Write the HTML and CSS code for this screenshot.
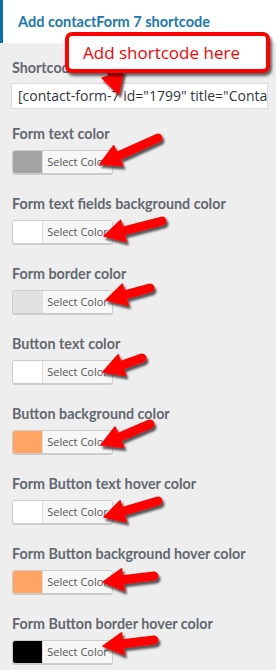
FILE: index.html
```html
<!DOCTYPE html>
<html>
<head>
<meta charset="utf-8">
<link rel="stylesheet" href="styles.css">
</head>
<body>
<div class="page">
  <div class="header">Add contactForm 7 shortcode</div>
  <div class="body">
    <div class="field first">
      <label class="label">Shortcode</label>
      <div class="input">[contact-form-7 id="1799" title="Contact form 1"]</div>
    </div>
    <div class="field">
      <label class="label">Form text color</label>
      <div class="color-btn"><span class="swatch" style="background:#a4a4a4"></span><span class="sel">Select Color</span></div>
    </div>
    <div class="field">
      <label class="label">Form text fields background color</label>
      <div class="color-btn"><span class="swatch" style="background:#ffffff"></span><span class="sel">Select Color</span></div>
    </div>
    <div class="field">
      <label class="label">Form border color</label>
      <div class="color-btn"><span class="swatch" style="background:#e2e2e2"></span><span class="sel">Select Color</span></div>
    </div>
    <div class="field">
      <label class="label">Button text color</label>
      <div class="color-btn"><span class="swatch" style="background:#ffffff"></span><span class="sel">Select Color</span></div>
    </div>
    <div class="field">
      <label class="label">Button background color</label>
      <div class="color-btn"><span class="swatch" style="background:#ffa463"></span><span class="sel">Select Color</span></div>
    </div>
    <div class="field">
      <label class="label">Form Button text hover color</label>
      <div class="color-btn"><span class="swatch" style="background:#ffffff"></span><span class="sel">Select Color</span></div>
    </div>
    <div class="field">
      <label class="label">Form Button background hover color</label>
      <div class="color-btn"><span class="swatch" style="background:#ffa463"></span><span class="sel">Select Color</span></div>
    </div>
    <div class="field">
      <label class="label">Form Button border hover color</label>
      <div class="color-btn"><span class="swatch" style="background:#000000"></span><span class="sel">Select Color</span></div>
    </div>
  </div>

  <svg class="arrows" width="276" height="670" viewBox="0 0 276 670" xmlns="http://www.w3.org/2000/svg">
    <defs>
      <filter id="sh" x="-30%" y="-30%" width="160%" height="160%">
        <feDropShadow dx="2" dy="3" stdDeviation="1.3" flood-color="#000" flood-opacity="0.65"/>
      </filter>
    </defs>
    <g class="arr" filter="url(#sh)">
      <g transform="translate(108 60) rotate(72.6)"><path class="shaft" d="M0 0 H18"/><path class="head" d="M15.5 -11 L35.5 0 L15.5 11 Z"/></g>
      <g transform="translate(158 138) rotate(155.9)"><path class="shaft" d="M0 0 H46"/><path class="head" d="M43.6 -11 L63.6 0 L43.6 11 Z"/></g>
      <g transform="translate(162 221) rotate(165.5)"><path class="shaft" d="M0 0 H42"/><path class="head" d="M39.9 -11 L59.9 0 L39.9 11 Z"/></g>
      <g transform="translate(150 288) rotate(164.7)"><path class="shaft" d="M0 0 H28"/><path class="head" d="M25.6 -11 L45.6 0 L25.6 11 Z"/></g>
      <g transform="translate(142 358) rotate(160.3)"><path class="shaft" d="M0 0 H24"/><path class="head" d="M21.4 -11 L41.4 0 L21.4 11 Z"/></g>
      <g transform="translate(150 424) rotate(156.8)"><path class="shaft" d="M0 0 H36"/><path class="head" d="M33.3 -11 L53.3 0 L33.3 11 Z"/></g>
      <g transform="translate(158 501) rotate(163.5)"><path class="shaft" d="M0 0 H38"/><path class="head" d="M36.3 -11 L56.3 0 L36.3 11 Z"/></g>
      <g transform="translate(154 576) rotate(173.3)"><path class="shaft" d="M0 0 H34"/><path class="head" d="M31.4 -11 L51.4 0 L31.4 11 Z"/></g>
      <g transform="translate(154 640) rotate(173.3)"><path class="shaft" d="M0 0 H34"/><path class="head" d="M31.4 -11 L51.4 0 L31.4 11 Z"/></g>
    </g>
  </svg>

  <div class="callout">Add shortcode here</div>
</div>
</body>
</html>
```

FILE: styles.css
```css
html, body {
  margin: 0;
  padding: 0;
  background: #eeeeee;
}
body {
  font-family: "Open Sans", "Noto Sans", sans-serif;
  color: #555d66;
}
.page {
  position: relative;
  width: 276px;
  height: 670px;
  overflow: hidden;
  background: #eeeeee;
}
.header {
  height: 43px;
  line-height: 43px;
  background: #ffffff;
  border-left: 3px solid #0073aa;
  padding-left: 15px;
  font-family: "Lato", "Open Sans", sans-serif;
  font-size: 14.5px;
  font-weight: 700;
  color: #1a78b0;
  white-space: nowrap;
}
.body {
  padding: 15px 8px 0 12px;
}
.field {
  margin-bottom: 20px;
}
.field.first {
  margin-bottom: 15px;
}
.label {
  display: block;
  font-family: "Lato", "Open Sans", sans-serif;
  font-size: 14.3px;
  font-weight: 700;
  line-height: 20px;
  color: #62686e;
  margin-bottom: 6px;
  white-space: nowrap;
}
.field.first .label {
  margin-bottom: 5px;
}
.input {
  margin-left: -1px;
  height: 26px;
  box-sizing: border-box;
  border: 1px solid #dddddd;
  background: #ffffff;
  font-size: 14px;
  line-height: 24px;
  padding-left: 6px;
  color: #32373c;
  white-space: nowrap;
  overflow: hidden;
}
.color-btn {
  display: flex;
  width: 101px;
  height: 24px;
  box-sizing: border-box;
  border: 1px solid #cccccc;
  border-radius: 3px;
  box-shadow: 0 1px 0 #cccccc;
  overflow: hidden;
  background: #f7f7f7;
}
.swatch {
  width: 29px;
  flex: none;
}
.sel {
  flex: 1;
  border-left: 1px solid #dddddd;
  background: #f7f7f7;
  font-size: 11px;
  line-height: 22px;
  color: #555555;
  text-align: center;
  white-space: nowrap;
}
.arrows {
  position: absolute;
  left: 0;
  top: 0;
  z-index: 1;
  pointer-events: none;
}
.arr .shaft {
  stroke: #ff0000;
  stroke-width: 9;
  stroke-linecap: round;
  fill: none;
}
.arr .head {
  fill: #ff0000;
  stroke: #ff0000;
  stroke-width: 1.5;
  stroke-linejoin: round;
}
.callout {
  position: absolute;
  z-index: 2;
  left: 65px;
  top: 32px;
  width: 205px;
  height: 41px;
  box-sizing: border-box;
  border: 4px solid #ff0000;
  border-radius: 7px;
  background: #ffffff;
  box-shadow: 2px 3px 3px rgba(0, 0, 0, 0.6);
  color: #ff0000;
  font-size: 17px;
  line-height: 33px;
  padding-left: 14px;
  white-space: nowrap;
}
```
